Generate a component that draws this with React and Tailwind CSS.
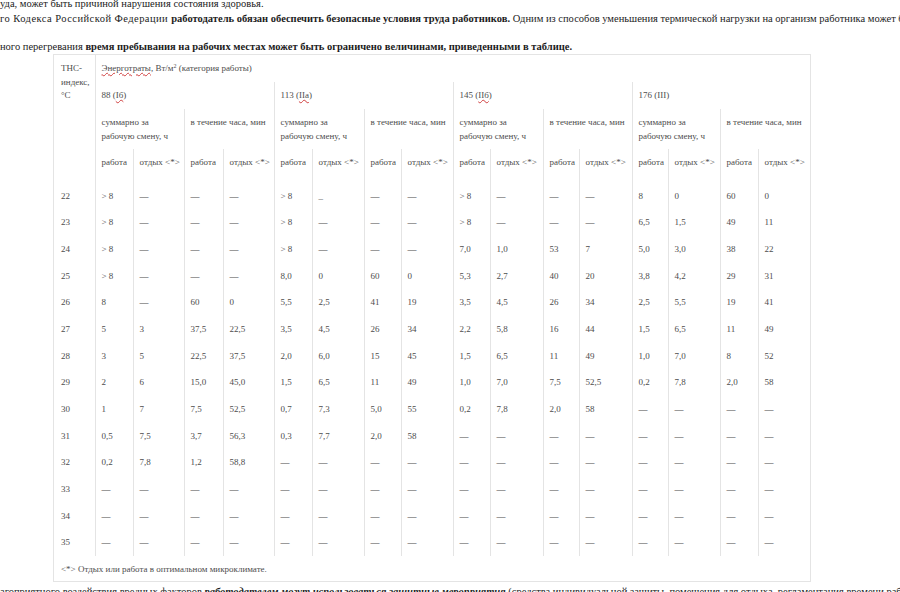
import React from "react";

const widths = [41, 38, 51, 39, 51, 38, 52, 37, 52, 37, 53, 36, 53, 36, 52, 38, 52];

const D = "—";
const rows = [
  ["22", ">\u00a08", D, D, D, ">\u00a08", "_", D, D, ">\u00a08", D, D, D, "8", "0", "60", "0"],
  ["23", ">\u00a08", D, D, D, ">\u00a08", D, D, D, ">\u00a08", D, D, D, "6,5", "1,5", "49", "11"],
  ["24", ">\u00a08", D, D, D, ">\u00a08", D, D, D, "7,0", "1,0", "53", "7", "5,0", "3,0", "38", "22"],
  ["25", ">\u00a08", D, D, D, "8,0", "0", "60", "0", "5,3", "2,7", "40", "20", "3,8", "4,2", "29", "31"],
  ["26", "8", D, "60", "0", "5,5", "2,5", "41", "19", "3,5", "4,5", "26", "34", "2,5", "5,5", "19", "41"],
  ["27", "5", "3", "37,5", "22,5", "3,5", "4,5", "26", "34", "2,2", "5,8", "16", "44", "1,5", "6,5", "11", "49"],
  ["28", "3", "5", "22,5", "37,5", "2,0", "6,0", "15", "45", "1,5", "6,5", "11", "49", "1,0", "7,0", "8", "52"],
  ["29", "2", "6", "15,0", "45,0", "1,5", "6,5", "11", "49", "1,0", "7,0", "7,5", "52,5", "0,2", "7,8", "2,0", "58"],
  ["30", "1", "7", "7,5", "52,5", "0,7", "7,3", "5,0", "55", "0,2", "7,8", "2,0", "58", D, D, D, D],
  ["31", "0,5", "7,5", "3,7", "56,3", "0,3", "7,7", "2,0", "58", D, D, D, D, D, D, D, D],
  ["32", "0,2", "7,8", "1,2", "58,8", D, D, D, D, D, D, D, D, D, D, D, D],
  ["33", D, D, D, D, D, D, D, D, D, D, D, D, D, D, D, D],
  ["34", D, D, D, D, D, D, D, D, D, D, D, D, D, D, D, D],
  ["35", D, D, D, D, D, D, D, D, D, D, D, D, D, D, D, D],
];

const groups = [
  { n: "88", c: "Iб" },
  { n: "113", c: "IIа" },
  { n: "145", c: "IIб" },
  { n: "176", c: "III", plain: true },
];

const cell = "align-top pl-[6px] pr-[2px] pt-[7px] text-left font-normal";
const bl = "border-l border-[#e4e4e4]";

function Wavy({ children }) {
  return (
    <span className="underline decoration-wavy decoration-[#d04040] decoration-[1px] underline-offset-[1px]">
      {children}
    </span>
  );
}

export default function App() {
  return (
    <div className="w-[900px] h-[592px] overflow-hidden bg-white text-[#1c1c1c] font-['Liberation_Serif','Times_New_Roman',serif]">
      <div className="text-[10.5px] leading-[15px] whitespace-nowrap -mt-[4px]">
        <p>уда, может быть причиной нарушения состояния здоровья.</p>
        <p>
          <span className="tracking-[0.45px]">го Кодекса Российской Федерации </span>
          <b>работодатель обязан обеспечить безопасные условия труда работников.</b> Одним из способов
          уменьшения термической нагрузки на организм работника может быть регламентация времени работы
        </p>
        <p className="mt-[13px]">
          ного перегревания{" "}
          <b>время пребывания на рабочих местах может быть ограничено величинами, приведенными в таблице.</b>
        </p>
      </div>

      <div className="ml-[53px] w-[758px] border border-[#e4e4e4] text-[#4d4d4d] text-[9px] leading-[13.5px]">
        <table className="table-fixed border-collapse w-[756px]">
          <colgroup>
            {widths.map((w, i) => (
              <col key={i} style={{ width: w }} />
            ))}
          </colgroup>
          <thead>
            <tr className="h-[27px]">
              <th rowSpan={4} className={cell + " pl-[7px]"}>
                ТНС-
                <br />
                индекс,
                <br />
                °С
              </th>
              <th colSpan={16} className={cell + " " + bl}>
                <Wavy>Энерготраты</Wavy>, Вт/м<sup className="text-[6px]">2</sup> (категория работы)
              </th>
            </tr>
            <tr className="h-[27px]">
              {groups.map((g) => (
                <th key={g.n} colSpan={4} className={cell + " " + bl}>
                  {g.n} ({g.plain ? g.c : <Wavy>{g.c}</Wavy>})
                </th>
              ))}
            </tr>
            <tr className="h-[40px]">
              {groups.map((g) => (
                <React.Fragment key={g.n}>
                  <th colSpan={2} className={cell + " " + bl}>
                    суммарно за
                    <br />
                    рабочую смену, ч
                  </th>
                  <th colSpan={2} className={cell + " " + bl + " whitespace-nowrap"}>
                    в течение часа, мин
                  </th>
                </React.Fragment>
              ))}
            </tr>
            <tr className="h-[33.5px]">
              {groups.map((g) => (
                <React.Fragment key={g.n}>
                  <th className={cell + " " + bl}>работа</th>
                  <th className={cell + " " + bl + " whitespace-nowrap"}>отдых &lt;*&gt;</th>
                  <th className={cell + " " + bl}>работа</th>
                  <th className={cell + " " + bl + " whitespace-nowrap"}>отдых &lt;*&gt;</th>
                </React.Fragment>
              ))}
            </tr>
          </thead>
          <tbody>
            {rows.map((r) => (
              <tr key={r[0]} className="h-[26.7px]">
                {r.map((v, i) => (
                  <td key={i} className={cell + (i === 0 ? " pl-[7px]" : " " + bl)}>
                    {v}
                  </td>
                ))}
              </tr>
            ))}
            <tr className="h-[25px]">
              <td colSpan={17} className={cell + " pl-[7px]"}>
                &lt;*&gt; Отдых или работа в оптимальном микроклимате.
              </td>
            </tr>
          </tbody>
        </table>
      </div>

      <p className="mt-[2px] text-[10.5px] leading-[15px] whitespace-nowrap">
        агоприятного воздействия вредных факторов{" "}
        <b>
          <i>работодателем могут использоваться защитные мероприятия</i>
        </b>{" "}
        (средства индивидуальной защиты, помещения для отдыха, регламентация времени работы)
      </p>
    </div>
  );
}
